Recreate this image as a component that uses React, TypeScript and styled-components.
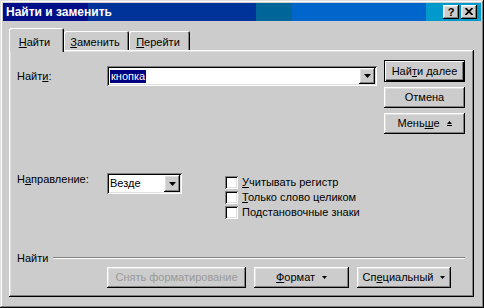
import React from "react";
import styled, { createGlobalStyle, css } from "styled-components";

const GlobalStyle = createGlobalStyle`
  html, body {
    margin: 0;
    padding: 0;
    background: #cccccc;
  }
  body {
    font-family: "Liberation Sans", Arial, sans-serif;
    font-size: 11px;
    color: #000;
  }
  * {
    box-sizing: border-box;
  }
`;

const raised = css`
  box-shadow: inset -1px -1px #000, inset 1px 1px #fff, inset -2px -2px #808080,
    inset 2px 2px #dfdfdf;
`;

const sunken = css`
  box-shadow: inset 1px 1px #808080, inset -1px -1px #fff, inset 2px 2px #000,
    inset -2px -2px #dfdfdf;
`;

const Window = styled.div`
  width: 484px;
  height: 308px;
  padding: 3px;
  background: #cccccc;
  display: flex;
  flex-direction: column;
  box-shadow: inset -1px -1px #000, inset 1px 1px #dfdfdf, inset -2px -2px #808080,
    inset 2px 2px #fff;
`;

const TitleBar = styled.div`
  height: 18px;
  display: flex;
  align-items: center;
  padding: 0 4px 0 3px;
  background: linear-gradient(
    to right,
    #000e88 0 85px,
    #003399 85px 253px,
    #006699 253px 289px,
    #0066cc 289px 423px,
    #0099cc 423px
  );
`;

const Title = styled.div`
  flex: 1;
  color: #fff;
  font-weight: bold;
  font-size: 12px;
  line-height: 18px;
`;

const TitleButton = styled.div`
  width: 16px;
  height: 14px;
  margin-left: 2px;
  background: #cccccc;
  display: flex;
  align-items: center;
  justify-content: center;
  font-weight: bold;
  font-size: 11px;
  line-height: 14px;
  padding-bottom: 1px;
  ${raised}
`;

const Body = styled.div`
  flex: 1;
  display: flex;
  flex-direction: column;
  padding: 7px 7px 8px 6px;
`;

const TabStrip = styled.div`
  height: 22px;
  display: flex;
  align-items: flex-end;
`;

const Tab = styled.div<{ $active?: boolean; $w: number }>`
  position: relative;
  z-index: ${(p) => (p.$active ? 2 : 0)};
  width: ${(p) => p.$w}px;
  height: ${(p) => (p.$active ? 24 : 19)}px;
  margin-bottom: ${(p) => (p.$active ? -2 : 0)}px;
  padding: ${(p) => (p.$active ? "8px 4px 0 0" : "5px 3px 0 0")};
  line-height: 13px;
  text-align: center;
  background: #cccccc;
  border-top-left-radius: 2px;
  border-top-right-radius: 2px;
  box-shadow: inset 1px 1px #fff, inset -1px 0 #000, inset -2px 0 #808080;
`;

const Panel = styled.div`
  flex: 1;
  position: relative;
  display: flex;
  flex-direction: column;
  padding: 0 9px 9px 8px;
  box-shadow: inset -1px -1px #000, inset 1px 1px #fff, inset -2px -2px #808080,
    inset 2px 2px #dfdfdf;
`;

const Key = styled.span`
  text-decoration: underline;
  text-underline-offset: 1px;
`;

const TopSection = styled.div`
  display: flex;
  align-items: flex-start;
  margin-top: 10px;
`;

const FieldRow = styled.div<{ $top: number; $align: string }>`
  display: flex;
  align-items: ${(p) => p.$align};
  margin-top: ${(p) => p.$top}px;
`;

const Label = styled.div`
  width: 90px;
  line-height: 13px;
`;

const Combo = styled.div<{ $w: number; $h: number }>`
  width: ${(p) => p.$w}px;
  height: ${(p) => p.$h}px;
  padding: 2px;
  display: flex;
  background: #fff;
  ${sunken}
`;

const ComboText = styled.div`
  flex: 1;
  display: flex;
  align-items: center;
  padding-left: 1px;
  line-height: 13px;
`;

const Selected = styled.span`
  background: #000080;
  color: #fff;
  padding: 0 1px;
`;

const DropButton = styled.div`
  width: 16px;
  background: #cccccc;
  display: flex;
  align-items: center;
  justify-content: center;
  ${raised}
`;

const ButtonColumn = styled.div`
  margin-left: auto;
  width: 81px;
  display: flex;
  flex-direction: column;
  gap: 5px;
`;

const Button = styled.div<{ $w?: number; $default?: boolean; $disabled?: boolean }>`
  width: ${(p) => (p.$w ? `${p.$w}px` : "100%")};
  height: ${(p) => (p.$default ? 22 : 21)}px;
  background: #cccccc;
  display: flex;
  align-items: center;
  justify-content: center;
  gap: 7px;
  line-height: 13px;
  color: ${(p) => (p.$disabled ? "#9a9a9a" : "#000")};
  ${(p) =>
    p.$default
      ? css`
          box-shadow: inset 0 0 0 1px #000, inset 2px 2px #fff, inset -2px -2px #000,
            inset -3px -3px #808080;
        `
      : raised}
`;

const MiddleSection = styled.div`
  display: flex;
  align-items: flex-start;
  margin-top: 39px;
`;

const CheckList = styled.div`
  display: flex;
  flex-direction: column;
  margin-left: 43px;
  margin-top: 3px;
  gap: 2px;
`;

const CheckRow = styled.div`
  display: flex;
  align-items: center;
  gap: 4px;
  height: 13px;
  line-height: 13px;
`;

const CheckBox = styled.div`
  width: 13px;
  height: 13px;
  background: #fff;
  ${sunken}
`;

const BottomSection = styled.div`
  margin-top: auto;
  display: flex;
  flex-direction: column;
`;

const GroupHeader = styled.div`
  display: flex;
  align-items: center;
  height: 13px;
  line-height: 13px;
`;

const GroupLine = styled.div`
  flex: 1;
  margin-left: 5px;
  margin-top: -1px;
  border-top: 1px solid #808080;
  border-bottom: 1px solid #fff;
`;

const ButtonRow = styled.div`
  display: flex;
  margin-top: 2px;
  margin-left: 90px;
  gap: 8px;
`;

const Arrow = () => (
  <svg width="7" height="4" viewBox="0 0 7 4">
    <path d="M0 0H7L3.5 4Z" fill="#000" />
  </svg>
);

const SmallArrow = () => (
  <svg width="5" height="3" viewBox="0 0 5 3">
    <path d="M0 0H5L2.5 3Z" fill="#000" />
  </svg>
);

const LessIcon = () => (
  <svg width="5" height="6" viewBox="0 0 5 6">
    <path d="M0 3H5L2.5 0Z" fill="#000" />
    <rect x="0" y="4" width="5" height="1" fill="#000" />
  </svg>
);

const CloseIcon = () => (
  <svg width="8" height="7" viewBox="0 0 8 7">
    <path d="M0.5 0L7.5 7M7.5 0L0.5 7" stroke="#000" strokeWidth="1.7" />
  </svg>
);

const App = () => {
  return (
    <>
      <GlobalStyle />
      <Window>
        <TitleBar>
          <Title>Найти и заменить</Title>
          <TitleButton>?</TitleButton>
          <TitleButton>
            <CloseIcon />
          </TitleButton>
        </TitleBar>
        <Body>
          <TabStrip>
            <Tab $active $w={55}>
              <Key>Н</Key>айти
            </Tab>
            <Tab $w={65}>
              <Key>З</Key>аменить
            </Tab>
            <Tab $w={61}>
              <Key>П</Key>ерейти
            </Tab>
          </TabStrip>
          <Panel>
            <TopSection>
              <FieldRow $top={6} $align="center">
                <Label>
                  Найт<Key>и</Key>:
                </Label>
                <Combo $w={270} $h={20}>
                  <ComboText>
                    <Selected>кнопка</Selected>
                  </ComboText>
                  <DropButton>
                    <Arrow />
                  </DropButton>
                </Combo>
              </FieldRow>
              <ButtonColumn>
                <Button $default>
                  <span>
                    Най<Key>т</Key>и далее
                  </span>
                </Button>
                <Button>Отмена</Button>
                <Button>
                  <span>
                    Мень<Key>ш</Key>е
                  </span>
                  <LessIcon />
                </Button>
              </ButtonColumn>
            </TopSection>

            <MiddleSection>
              <FieldRow $top={0} $align="flex-start">
                <Label>
                  Н<Key>а</Key>правление:
                </Label>
                <Combo $w={75} $h={21}>
                  <ComboText>Везде</ComboText>
                  <DropButton>
                    <Arrow />
                  </DropButton>
                </Combo>
              </FieldRow>
              <CheckList>
                <CheckRow>
                  <CheckBox />
                  <span>
                    <Key>У</Key>читывать регистр
                  </span>
                </CheckRow>
                <CheckRow>
                  <CheckBox />
                  <span>
                    <Key>Т</Key>олько слово целиком
                  </span>
                </CheckRow>
                <CheckRow>
                  <CheckBox />
                  <span>
                    По<Key>д</Key>становочные знаки
                  </span>
                </CheckRow>
              </CheckList>
            </MiddleSection>

            <BottomSection>
              <GroupHeader>
                <span>Найти</span>
                <GroupLine />
              </GroupHeader>
              <ButtonRow>
                <Button $w={139} $disabled>
                  Снять форматирование
                </Button>
                <Button $w={95}>
                  <span>
                    <Key>Ф</Key>ормат
                  </span>
                  <SmallArrow />
                </Button>
                <Button $w={94}>
                  <span>
                    Сп<Key>е</Key>циальный
                  </span>
                  <SmallArrow />
                </Button>
              </ButtonRow>
            </BottomSection>
          </Panel>
        </Body>
      </Window>
    </>
  );
};

export default App;
